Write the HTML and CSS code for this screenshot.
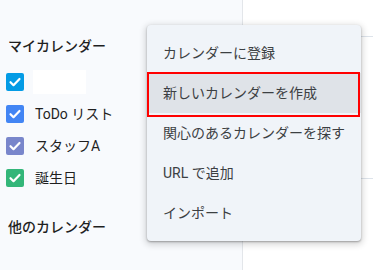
FILE: index.html
```html
<!DOCTYPE html>
<html lang="ja">
<head>
<meta charset="UTF-8">
<meta name="viewport" content="width=device-width, initial-scale=1.0">
<title>カレンダー</title>
<link rel="stylesheet" href="styles.css">
</head>
<body>

<div class="app">
  <aside class="sidebar">
    <h2 class="section-title">マイカレンダー</h2>
    <ul class="cal-list">
      <li class="cal-item">
        <span class="check c-blue"><svg viewBox="0 0 18 18"><path d="M4.5 9.2l3 3 6-6.2" /></svg></span>
        <span class="hidden-name"></span>
      </li>
      <li class="cal-item">
        <span class="check c-todo"><svg viewBox="0 0 18 18"><path d="M4.5 9.2l3 3 6-6.2" /></svg></span>
        <span>ToDo リスト</span>
      </li>
      <li class="cal-item">
        <span class="check c-staff"><svg viewBox="0 0 18 18"><path d="M4.5 9.2l3 3 6-6.2" /></svg></span>
        <span>スタッフA</span>
      </li>
      <li class="cal-item">
        <span class="check c-birthday"><svg viewBox="0 0 18 18"><path d="M4.5 9.2l3 3 6-6.2" /></svg></span>
        <span>誕生日</span>
      </li>
    </ul>

    <h2 class="section-title other">他のカレンダー</h2>
  </aside>

  <main class="grid">
    <div class="grid-row first"></div>
    <div class="grid-row"></div>
  </main>

  <div class="menu">
    <div class="menu-item">カレンダーに登録</div>
    <div class="menu-item active">新しいカレンダーを作成</div>
    <div class="menu-item">関心のあるカレンダーを探す</div>
    <div class="menu-item">URL で追加</div>
    <div class="menu-item">インポート</div>
  </div>
</div>

</body>
</html>
```

FILE: styles.css
```css
body {
  margin: 0;
  padding: 0;
  font-family: Roboto, 'Noto Sans CJK JP', sans-serif;
  color: #1f1f1f;
  font-size: 14px;
  overflow: hidden;
}
.app {
  position: relative;
  display: flex;
  height: 270px;
  width: 373px;
}
.sidebar {
  width: 243px;
  flex-shrink: 0;
  padding-top: 36px;
  background-color: #f8fafd;
  border-right: 1px solid #e3e6ea;
  box-sizing: border-box;
  overflow: hidden;
}
.section-title {
  margin: 0 0 10px 8px;
  font-size: 14px;
  font-weight: 500;
  line-height: 20px;
  color: #1f1f1f;
}
.section-title.other {
  margin-top: 23px;
}
.cal-list {
  list-style: none;
  margin: 0;
  padding: 0;
}
.cal-item {
  display: flex;
  align-items: center;
  height: 32px;
  padding-left: 6px;
  gap: 11px;
  line-height: 20px;
}
.check {
  width: 18px;
  height: 18px;
  border-radius: 2px;
  display: flex;
  flex-shrink: 0;
}
.check svg {
  width: 18px;
  height: 18px;
  fill: none;
  stroke: #fff;
  stroke-width: 2.2;
  stroke-linecap: round;
  stroke-linejoin: round;
}
.c-blue { background-color: #039be5; }
.c-todo { background-color: #4285f4; }
.c-staff { background-color: #7986cb; }
.c-birthday { background-color: #33b679; }
.hidden-name {
  display: block;
  width: 53px;
  height: 24px;
  margin-left: -2px;
  background-color: #fff;
}
.grid {
  flex: 1;
  background-color: #fff;
}
.grid-row {
  height: 141px;
  border-bottom: 1px solid #dde3ea;
}
.grid-row.first {
  height: 36px;
}
.menu {
  position: absolute;
  left: 147px;
  top: 25px;
  width: 214px;
  padding: 8px 0;
  background-color: #f0f4f9;
  border-radius: 4px;
  box-shadow: 0 1px 2px rgba(0, 0, 0, 0.3), 0 2px 6px 2px rgba(0, 0, 0, 0.15);
}
.menu-item {
  position: relative;
  height: 40px;
  line-height: 40px;
  padding-left: 16px;
  white-space: nowrap;
  color: #3c4043;
}
.menu-item.active {
  background-color: #dfe3e8;
}
.menu-item.active::after {
  content: "";
  position: absolute;
  left: 0;
  right: 1px;
  top: -1px;
  bottom: -4px;
  border: 2px solid #ff0000;
}
```
